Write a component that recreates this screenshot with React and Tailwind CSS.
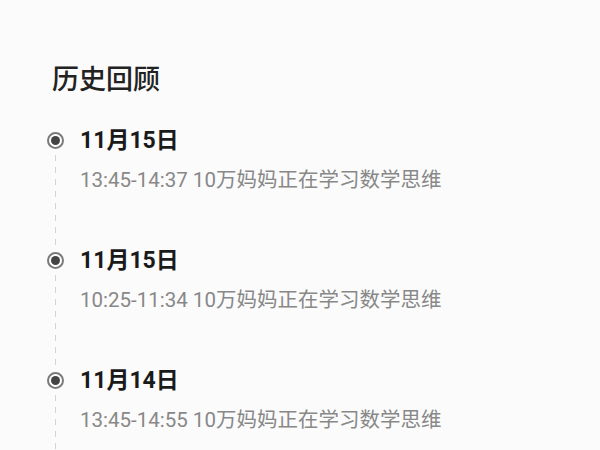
import React from 'react'

const records = [
  { date: '11月15日', time: '13:45-14:37', text: '10万妈妈正在学习数学思维' },
  { date: '11月15日', time: '10:25-11:34', text: '10万妈妈正在学习数学思维' },
  { date: '11月14日', time: '13:45-14:55', text: '10万妈妈正在学习数学思维' },
]

function Dot() {
  return (
    <div className="w-[17px] h-[17px] rounded-full border-2 border-[#7a7a7a] bg-white flex items-center justify-center shrink-0">
      <div className="w-[9px] h-[9px] rounded-full bg-[#444]" />
    </div>
  )
}

export default function App() {
  return (
    <div
      className="w-[600px] h-[450px] overflow-hidden bg-[#fbfbfb] pl-[47px] pt-[64px]"
      style={{ fontFamily: 'Roboto, "Noto Sans CJK SC", sans-serif' }}
    >
      <h1 className="text-[27px] leading-[32px] font-medium text-[#222] pl-[5px]">历史回顾</h1>
      <div className="mt-[29px] flex flex-col">
        {records.map((r, i) => (
          <div key={i} className="flex h-[120px]">
            <div className="w-[17px] flex flex-col items-center pt-[7px]">
              <Dot />
              <div className="w-px flex-1 mt-[6px] mb-[-1px] bg-[repeating-linear-gradient(to_bottom,#d4d4d4_0_6px,transparent_6px_12px)]" />
            </div>
            <div className="pl-[16px]">
              <div className="text-[23px] leading-[31px] font-bold text-[#1a1a1a]">{r.date}</div>
              <div className="mt-[10px] text-[20.5px] leading-[28px] text-[#888]">
                {r.time} {r.text}
              </div>
            </div>
          </div>
        ))}
      </div>
    </div>
  )
}
